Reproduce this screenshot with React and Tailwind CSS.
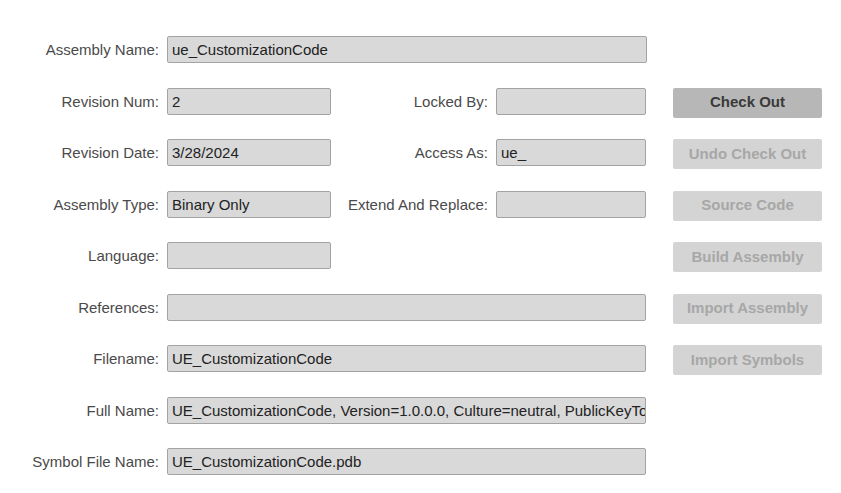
import React from "react";

const font = { fontFamily: '"Liberation Sans", Arial, sans-serif' };

function Label({ children, className = "" }) {
  return (
    <div className={`text-[15px] leading-[27px] text-[#4a4a4a] text-right whitespace-nowrap ${className}`}>
      {children}
    </div>
  );
}

function Field({ value = "", className = "" }) {
  return (
    <div
      className={`h-[27px] bg-[#d9d9d9] border border-[#a3a3a3] rounded-[2px] px-[4px] text-[15px] leading-[25px] text-[#222] whitespace-nowrap overflow-hidden ${className}`}
    >
      {value}
    </div>
  );
}

function Btn({ children, active = false }) {
  return (
    <div
      className={`ml-[27px] w-[149px] h-[30px] rounded-[2px] flex items-center justify-center text-[15px] font-bold whitespace-nowrap ${
        active ? "bg-[#b7b7b7] text-[#3a3a3a]" : "bg-[#d4d4d4] text-[#a7a7a7]"
      }`}
    >
      {children}
    </div>
  );
}

function Row({ children }) {
  return <div className="flex items-start h-[27px]">{children}</div>;
}

export default function App() {
  return (
    <div className="w-[841px] h-[493px] bg-white" style={font}>
      <div className="flex flex-col gap-[24.5px] pt-[36px]">
        <Row>
          <Label className="w-[159px]">Assembly Name:</Label>
          <Field className="ml-[8px] w-[480px]" value="ue_CustomizationCode" />
        </Row>
        <Row>
          <Label className="w-[159px]">Revision Num:</Label>
          <Field className="ml-[8px] w-[164px]" value="2" />
          <Label className="w-[157px]">Locked By:</Label>
          <Field className="ml-[8px] w-[150px]" />
          <Btn active>Check Out</Btn>
        </Row>
        <Row>
          <Label className="w-[159px]">Revision Date:</Label>
          <Field className="ml-[8px] w-[164px]" value="3/28/2024" />
          <Label className="w-[157px]">Access As:</Label>
          <Field className="ml-[8px] w-[150px]" value="ue_" />
          <Btn>Undo Check Out</Btn>
        </Row>
        <Row>
          <Label className="w-[159px]">Assembly Type:</Label>
          <Field className="ml-[8px] w-[164px]" value="Binary Only" />
          <Label className="w-[157px]">Extend And Replace:</Label>
          <Field className="ml-[8px] w-[150px]" />
          <Btn>Source Code</Btn>
        </Row>
        <Row>
          <Label className="w-[159px]">Language:</Label>
          <Field className="ml-[8px] w-[164px]" />
          <div className="w-[315px]" />
          <Btn>Build Assembly</Btn>
        </Row>
        <Row>
          <Label className="w-[159px]">References:</Label>
          <Field className="ml-[8px] w-[479px]" />
          <Btn>Import Assembly</Btn>
        </Row>
        <Row>
          <Label className="w-[159px]">Filename:</Label>
          <Field className="ml-[8px] w-[479px]" value="UE_CustomizationCode" />
          <Btn>Import Symbols</Btn>
        </Row>
        <Row>
          <Label className="w-[159px]">Full Name:</Label>
          <Field
            className="ml-[8px] w-[479px]"
            value="UE_CustomizationCode, Version=1.0.0.0, Culture=neutral, PublicKeyToken=null"
          />
        </Row>
        <Row>
          <Label className="w-[159px]">Symbol File Name:</Label>
          <Field className="ml-[8px] w-[479px]" value="UE_CustomizationCode.pdb" />
        </Row>
      </div>
    </div>
  );
}
